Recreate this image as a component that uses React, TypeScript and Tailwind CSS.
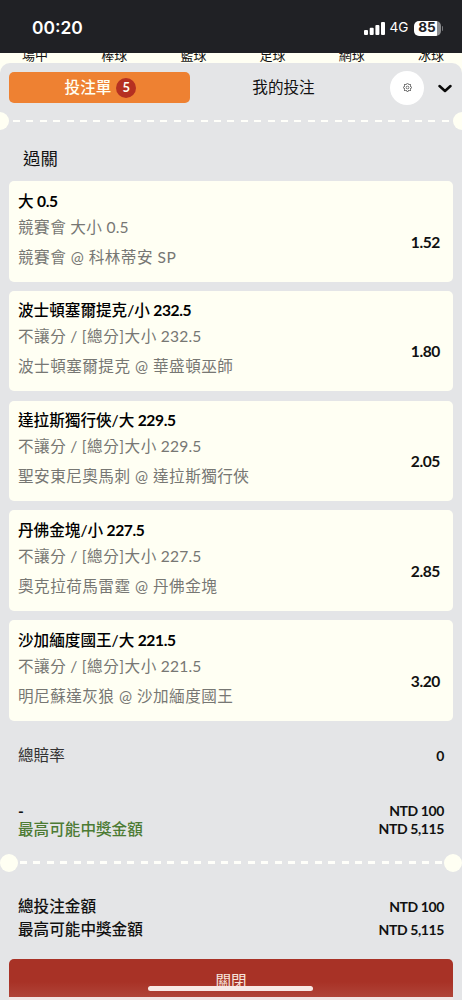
import { BsGear } from "react-icons/bs";

interface Bet {
  pick: string;
  market: string;
  line: string;
  match: string;
  odds: string;
}

const BETS: Bet[] = [
  { pick: "大", market: "競賽會 大小", line: "0.5", match: "競賽會 @ 科林蒂安 SP", odds: "1.52" },
  { pick: "波士頓塞爾提克/小", market: "不讓分 / [總分]大小", line: "232.5", match: "波士頓塞爾提克 @ 華盛頓巫師", odds: "1.80" },
  { pick: "達拉斯獨行俠/大", market: "不讓分 / [總分]大小", line: "229.5", match: "聖安東尼奧馬刺 @ 達拉斯獨行俠", odds: "2.05" },
  { pick: "丹佛金塊/小", market: "不讓分 / [總分]大小", line: "227.5", match: "奧克拉荷馬雷霆 @ 丹佛金塊", odds: "2.85" },
  { pick: "沙加緬度國王/大", market: "不讓分 / [總分]大小", line: "221.5", match: "明尼蘇達灰狼 @ 沙加緬度國王", odds: "3.20" },
];

const SPORTS = ["場中", "棒球", "籃球", "足球", "網球", "冰球"];

function StatusBar() {
  return (
    <div className="flex h-[53px] shrink-0 items-center justify-between bg-[#202125] pl-8 pr-[19px] pt-[3px] text-white">
      <span className="font-['Inter','Noto_Sans_CJK_TC',sans-serif] text-[17.4px] font-semibold leading-none">
        00:20
      </span>
      <div className="flex items-center">
        <svg width="21" height="13" viewBox="0 0 21 13" fill="currentColor">
          <rect x="0" y="8" width="4" height="5" rx="1" />
          <rect x="5.7" y="5.7" width="4" height="7.3" rx="1" />
          <rect x="11.4" y="3" width="4" height="10" rx="1" />
          <rect x="17" y="0" width="4" height="13" rx="1" />
        </svg>
        <span className="ml-[5px] font-['Inter',sans-serif] text-[13.6px] leading-none">4G</span>
        <div className="ml-[5px] flex h-[15px] w-[27px] items-center justify-center rounded-[5px] bg-[linear-gradient(90deg,#fff_85%,#8b8c8e_85%)] font-['Inter',sans-serif] text-[13.6px] font-bold leading-none text-[#202125]">
          85
        </div>
        <div className="ml-px h-[5px] w-[1.5px] rounded-r-full bg-[#77787b]" />
      </div>
    </div>
  );
}

function Divider({ inset }: { inset?: boolean }) {
  return (
    <div className={`flex h-[18px] shrink-0 items-center ${inset ? "" : "-mx-[9px]"}`}>
      <div className="size-[18px] shrink-0 rounded-full bg-[#fffff3]" />
      <div
        className={`h-[2.5px] flex-1 bg-[repeating-linear-gradient(90deg,#fffffa_0,#fffffa_7px,transparent_7px,transparent_13.4px)] ${
          inset ? "ml-[2px] mr-[1px]" : "mx-[4px]"
        }`}
      />
      <div className="size-[18px] shrink-0 rounded-full bg-[#fffff3]" />
    </div>
  );
}

function BetCard({ bet }: { bet: Bet }) {
  return (
    <div className="flex h-[100.6px] shrink-0 items-center justify-between rounded-[5px] bg-[#fffff3] pl-[9px] pr-[13px]">
      <div className="-mt-[2.4px] whitespace-nowrap">
        <div className="h-[24px] font-medium leading-[24px] text-black [word-spacing:-0.5px]">
          {bet.pick} <span className="font-bold tracking-[-0.4px]">{bet.line}</span>
        </div>
        <div className="h-[31px] pt-[2px] leading-[24px] tracking-[0.5px] text-[#777773] [word-spacing:-0.5px]">
          {bet.market} <span className="tracking-[0.2px]">{bet.line}</span>
        </div>
        <div className="h-[28px] leading-[27px] tracking-[0.48px] text-[#777773]">{bet.match}</div>
      </div>
      <span className="mt-[22px] font-bold leading-none tracking-[-0.4px] text-[#111]">{bet.odds}</span>
    </div>
  );
}

function Amount({ children }: { children: string }) {
  return <span className="text-[14px] font-bold tracking-[-0.4px]">{children}</span>;
}

export default function App() {
  return (
    <div className="flex h-[1000px] w-[462px] flex-col overflow-hidden bg-[#fffff3] font-['Lato','Noto_Sans_CJK_TC',sans-serif] text-[15.6px] text-[#111]">
      <StatusBar />
      <div className="flex h-[10px] shrink-0 items-end justify-between overflow-hidden pl-[22px] pr-[18px] text-[13px] leading-[16px]">
        {SPORTS.map((s) => (
          <span key={s}>{s}</span>
        ))}
      </div>

      <div className="flex flex-1 flex-col overflow-hidden rounded-t-[10px] bg-[#e4e5e7]">
        <div className="flex h-[49px] shrink-0 items-center px-[9px]">
          <button className="flex h-[31px] w-[181px] items-center justify-center gap-[5px] rounded-[5px] bg-[#ee8132] pl-[2px] text-[#fffff3]">
            <span className="font-medium">投注單</span>
            <span className="flex size-5 items-center justify-center rounded-full bg-[#b53021] text-[13px] font-bold">5</span>
          </button>
          <button className="w-[187px] text-center">我的投注</button>
          <button className="ml-[13px] flex size-[34px] items-center justify-center rounded-full bg-white">
            <BsGear className="size-[9px] text-[#333]" />
          </button>
          <svg
            className="ml-[14px] mt-[2px]"
            width="14"
            height="9"
            viewBox="0 0 14 9"
            fill="none"
            stroke="#0a0a0a"
            strokeWidth="2.5"
            strokeLinecap="round"
            strokeLinejoin="round"
          >
            <path d="M1.500 2l5.500 5 5.500-5" />
          </svg>
        </div>
        <Divider />

        <h2 className="h-[51px] shrink-0 pl-[23px] pt-[17px] text-[17.4px] leading-[24px]">過關</h2>
        <div className="flex shrink-0 flex-col gap-[9.2px] px-[9px]">
          {BETS.map((bet) => (
            <BetCard key={bet.pick} bet={bet} />
          ))}
        </div>

        <div className="flex h-[70px] shrink-0 items-center justify-between px-[18px]">
          <span className="text-[#333]">總賠率</span>
          <Amount>0</Amount>
        </div>
        <div className="h-[63px] shrink-0 px-[18px] pt-[11.5px] leading-[18px]">
          <div className="flex justify-between">
            <span className="font-bold">-</span>
            <Amount>NTD 100</Amount>
          </div>
          <div className="flex justify-between">
            <span className="font-medium text-[#4c7b34]">最高可能中獎金額</span>
            <Amount>NTD 5,115</Amount>
          </div>
        </div>
        <Divider inset />

        <div className="h-[87px] shrink-0 px-[18px] pt-[23px] leading-[23.5px]">
          <div className="flex justify-between">
            <span className="font-medium">總投注金額</span>
            <Amount>NTD 100</Amount>
          </div>
          <div className="flex justify-between">
            <span className="font-medium">最高可能中獎金額</span>
            <Amount>NTD 5,115</Amount>
          </div>
        </div>
        <div className="relative mx-[9px] h-[38.5px] shrink-0 rounded-t-[5px] bg-[linear-gradient(#a83226_60%,#b04438)] pt-[9.5px] text-center leading-[26px] text-[#f7e4dc]">
          關閉
          <div className="absolute left-[139px] top-[27px] h-[5.5px] w-[165px] rounded-full bg-[#f8e9e5]" />
        </div>
        <div className="mx-[9px] flex-1 bg-[#f2e6e5]" />
      </div>
    </div>
  );
}
